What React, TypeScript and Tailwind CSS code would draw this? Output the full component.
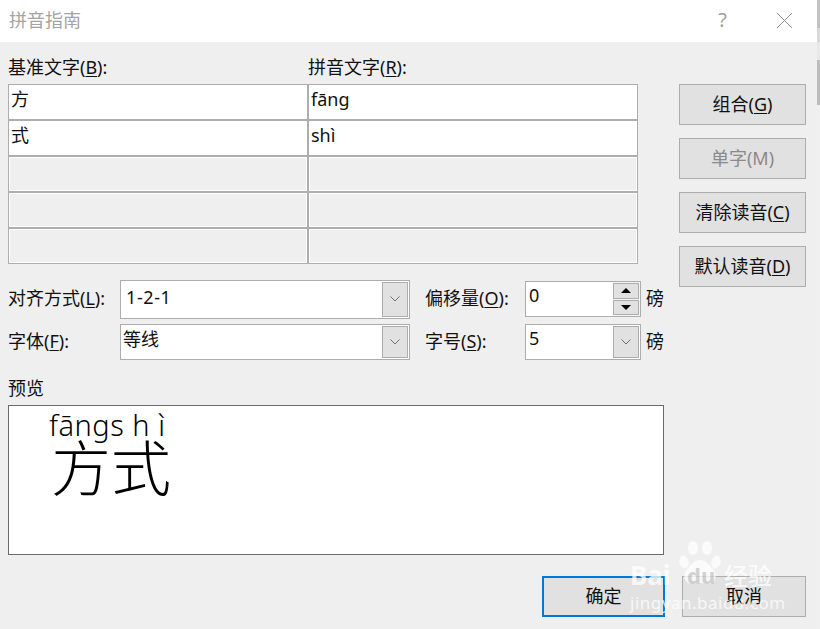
const cjk = "font-['Noto_Sans','Noto_Sans_CJK_SC',sans-serif]";

function Chevron() {
  return (
    <svg width="10" height="6" viewBox="0 0 10 6" fill="none" stroke="#6f6f6f" strokeWidth="1">
      <path d="M0.5 0.5L5 5L9.5 0.5" />
    </svg>
  );
}

function DropButton() {
  return (
    <div className="flex items-center self-stretch p-px">
      <div className="flex h-full w-[26px] items-center justify-center border border-[#adadad] bg-[#e1e1e1]">
        <Chevron />
      </div>
    </div>
  );
}

function Label({ children, k, rest, className = "" }: { children: string; k?: string; rest?: string; className?: string }) {
  return (
    <span className={`whitespace-nowrap text-[18px] leading-[22px] text-[#111] ${className}`}>
      {children}
      {k && (
        <>
          (<span className="underline underline-offset-2">{k}</span>){rest}
        </>
      )}
    </span>
  );
}

function Cell({ text, disabled, wide }: { text?: string; disabled?: boolean; wide?: boolean }) {
  return (
    <div className={`h-[36px] ${wide ? "flex-1" : "w-[300px]"} border border-[#adadad] ${disabled ? "bg-[#efefef] shadow-[inset_0_0_0_1px_#ffffff]" : "bg-white"} pl-[2px] pt-[1px] text-[18px] leading-[26px] text-[#111]`}>
      {text}
    </div>
  );
}

function Btn({ children, k, disabled }: { children: string; k: string; disabled?: boolean }) {
  return (
    <div className={`flex h-[41px] w-[127px] items-center justify-center whitespace-nowrap border border-[#adadad] bg-[#e1e1e1] text-[18px] ${disabled ? "text-[#8a8a8a]" : "text-[#111]"}`}>
      {children}(<span className={disabled ? "" : "underline underline-offset-2"}>{k}</span>)
    </div>
  );
}

function Watermark() {
  return (
    <div className="pointer-events-none absolute left-[628px] top-[541px] h-[72px] w-[150px] text-white opacity-75">
      <svg className="absolute left-[50px] top-0" width="44" height="46" viewBox="0 0 44 46" fill="currentColor">
        <ellipse cx="6" cy="21" rx="4.5" ry="6.5" transform="rotate(-15 6 21)" />
        <ellipse cx="15" cy="7" rx="5" ry="7" />
        <ellipse cx="29" cy="7" rx="5" ry="7" />
        <ellipse cx="38" cy="21" rx="4.5" ry="6.5" transform="rotate(15 38 21)" />
        <path d="M22 19c6 0 9 5 13 9 5 5 3 15-5 15-3 0-5-1-8-1s-5 1-8 1c-8 0-10-10-5-15 4-4 7-9 13-9z" />
      </svg>
      <div className="absolute left-[59px] top-[21px] text-[22px] font-bold leading-[26px] text-[#c9c9c9]">du</div>
      <div className="absolute left-[2px] top-[19px] text-[26px] font-bold leading-[30px]">Bai</div>
      <div className="absolute left-[96px] top-[20px] whitespace-nowrap text-[24px] font-medium leading-[30px]">经验</div>
      <div className="absolute left-[2px] top-[52px] whitespace-nowrap text-[17px] leading-[20px] tracking-[0.5px]">jingyan.baidu.com</div>
    </div>
  );
}

export default function App() {
  const rows: [string, string, boolean][] = [
    ["方", "fāng", false],
    ["式", "shì", false],
    ["", "", true],
    ["", "", true],
    ["", "", true],
  ];
  return (
    <div className={`relative flex h-[629px] w-[820px] overflow-hidden ${cjk}`}>
      <div className="flex w-[817px] shrink-0 flex-col bg-[#efefef]">
        <div className="flex h-[42px] shrink-0 items-center justify-between bg-white pb-[2px] pl-[9px] pr-[24px]">
          <span className="text-[18px] text-[#a3a3a3]">拼音指南</span>
          <div className="flex items-center gap-[49px]">
            <span className="text-[20px] leading-none text-[#a0a0a0]">?</span>
            <svg width="17" height="17" viewBox="0 0 17 17" stroke="#8f8f8f" strokeWidth="1" fill="none">
              <path d="M1 1L16 16M16 1L1 16" />
            </svg>
          </div>
        </div>
        <div className="flex flex-1 flex-col pl-[8px] pr-[11px]">
          <div className="flex gap-[41px]">
            <div className="flex w-[630px] shrink-0 flex-col">
              <div className="flex h-[42px] items-end pb-[6px]">
                <Label k="B" rest=":" className="w-[300px]">基准文字</Label>
                <Label k="R" rest=":">拼音文字</Label>
              </div>
              {rows.map(([a, b, d], i) => (
                <div key={i} className="flex">
                  <Cell text={a} disabled={d} />
                  <Cell text={b} disabled={d} wide />
                </div>
              ))}
            </div>
            <div className="flex flex-col gap-[13px] pt-[42px]">
              <Btn k="G">组合</Btn>
              <Btn k="M" disabled>单字</Btn>
              <Btn k="C">清除读音</Btn>
              <Btn k="D">默认读音</Btn>
            </div>
          </div>
          <div className="mt-[-8px] flex h-[40px] w-[656px] items-center">
            <Label k="L" rest=":" className="mb-[3px] w-[112px]">对齐方式</Label>
            <div className="flex h-[39px] w-[290px] items-stretch justify-between border border-[#adadad] bg-white pl-[5px] text-[18px] leading-[33px] tracking-[0.6px] text-[#111]">
              <span>1-2-1</span>
              <DropButton />
            </div>
            <Label k="O" rest=":" className="mb-[3px] ml-[15px] w-[100px]">偏移量</Label>
            <div className="flex h-[36px] w-[116px] items-stretch justify-between border border-[#adadad] bg-white pl-[3px] text-[18px] leading-[27px] text-[#111]">
              <span>0</span>
              <div className="flex w-[27px] flex-col gap-px bg-[#f4f4f4] py-px pr-px">
                <div className="flex flex-1 items-center justify-center border border-[#adadad] bg-[#e1e1e1]">
                  <div className="h-0 w-0 border-x-[5px] border-b-[5px] border-x-transparent border-b-black" />
                </div>
                <div className="flex flex-1 items-center justify-center border border-[#adadad] bg-[#e1e1e1]">
                  <div className="h-0 w-0 border-x-[5px] border-t-[5px] border-x-transparent border-t-black" />
                </div>
              </div>
            </div>
            <Label className="mb-[3px] ml-[5px]">磅</Label>
          </div>
          <div className="mt-[5px] flex h-[36px] w-[656px] items-center">
            <Label k="F" rest=":" className="mb-[2px] w-[112px]">字体</Label>
            <div className="flex h-[36px] w-[290px] items-stretch justify-between border border-[#adadad] bg-white pl-[2px] text-[18px] leading-[29px] text-[#111]">
              <span>等线</span>
              <DropButton />
            </div>
            <Label k="S" rest=":" className="mb-[2px] ml-[15px] w-[100px]">字号</Label>
            <div className="flex h-[36px] w-[116px] items-stretch justify-between border border-[#adadad] bg-white pl-[3px] text-[18px] leading-[27px] text-[#111]">
              <span>5</span>
              <DropButton />
            </div>
            <Label className="mb-[2px] ml-[5px]">磅</Label>
          </div>
          <Label className="mt-[17px]">预览</Label>
          <div className="mt-[6px] h-[150px] w-[656px] border border-[#6a6a6a] bg-white pl-[40px] pt-[1px] text-black">
            <div className="flex h-[34px] items-center text-[29px] font-light leading-none tracking-[0.5px]">
              <span>fāngs h ì</span>
            </div>
            <div className="ml-[2px] mt-[1px] text-[60px] font-light leading-[52px]">方式</div>
          </div>
          <div className="mt-[21px] flex w-full justify-end gap-[17px]">
            <div className="flex h-[41px] w-[123px] items-center justify-center border-2 border-[#0078d7] bg-[#e1e1e1] text-[18px] text-[#111]">确定</div>
            <div className="flex h-[41px] w-[124px] items-center justify-center border border-[#adadad] bg-[#e1e1e1] text-[18px] text-[#111]">取消</div>
          </div>
        </div>
      </div>
      <div className="flex w-[3px] flex-col">
        <div className="h-[28px] bg-[#c2c2c2]" />
        <div className="h-[14px] bg-[#d9d9d9]" />
        <div className="h-[18px] bg-[#e8e8e8]" />
        <div className="h-[45px] bg-[#bdbdbd]" />
        <div className="flex-1 bg-[#f0f0f0]" />
      </div>
      <Watermark />
    </div>
  );
}
